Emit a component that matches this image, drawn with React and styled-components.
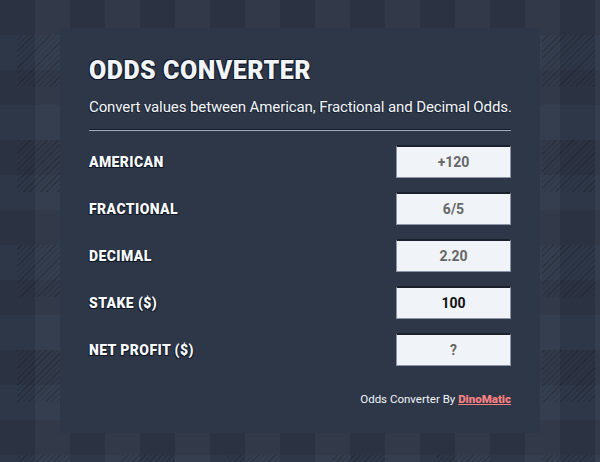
import React from "react";
import styled, { createGlobalStyle } from "styled-components";

const Global = createGlobalStyle`
  html, body { margin: 0; padding: 0; }
  body {
    background-color: #2d3748;
    font-family: "Roboto", "Inter", sans-serif;
    min-height: 462px;
  }
`;

const Page = styled.div`
  position: relative;
  min-height: 462px;
  padding-top: 28px;
  box-sizing: border-box;
  background-color: #2e3748;
  background-image:
    linear-gradient(90deg, rgba(255,255,255,0.035) 50%, transparent 50%),
    linear-gradient(0deg, rgba(0,0,0,0.07) 50%, transparent 50%);
  background-size: 70px 70px, 70px 70px;
  background-position: 35px 0, 0 35px;
  &::before {
    content: "";
    position: absolute;
    inset: 0;
    background-image: repeating-linear-gradient(
      135deg,
      rgba(0, 0, 0, 0.16) 0 1px,
      transparent 1px 4px
    );
    -webkit-mask-image: conic-gradient(#000 0 25%, transparent 0 100%);
    -webkit-mask-size: 105px 105px;
    -webkit-mask-position: 70px 35px;
    mask-image: conic-gradient(#000 0 25%, transparent 0 100%);
    mask-size: 105px 105px;
    mask-position: 70px 35px;
    pointer-events: none;
  }
`;

const Card = styled.div`
  position: relative;
  z-index: 1;
  width: 480px;
  height: 405px;
  margin: 0 auto;
  background: #2d3748;
  padding: 26px 29px 0;
  box-sizing: border-box;
  color: #f7fafc;
`;

const Title = styled.h1`
  margin: 0;
  font-size: 25px;
  font-weight: 900;
  letter-spacing: 0.5px;
  line-height: 34px;
  color: #f1f5f9;
  text-shadow: -1px 1px 0 #111827, 1px 1px 0 #111827, -1px -1px 0 #111827;
`;

const Subtitle = styled.p`
  margin: 7px 0 0;
  font-size: 15px;
  letter-spacing: -0.1px;
  white-space: nowrap;
  line-height: 24px;
  color: #f1f5f9;
  text-shadow: -1px 1px 0 #1a202c;
`;

const Divider = styled.hr`
  margin: 10px 0 0;
  border: 0;
  border-top: 1px solid #161c28;
  border-bottom: 1px solid #a0aec0;
  height: 0;
`;

const Rows = styled.div`
  display: flex;
  flex-direction: column;
  gap: 14px;
  margin-top: 14px;
`;

const Row = styled.div`
  display: flex;
  align-items: center;
  justify-content: space-between;
`;

const Label = styled.label`
  font-size: 14px;
  font-weight: 900;
  letter-spacing: 0.4px;
  color: #f8fafc;
  text-transform: uppercase;
  text-shadow: -1px 1px 0 #111827, 1px 1px 0 #111827;
`;

const Field = styled.div`
  width: 115px;
  height: 33px;
  box-sizing: border-box;
  background: #f0f4f8;
  border: 1px solid #8b95a7;
  border-top: 2px solid #1a202c;
  display: flex;
  align-items: center;
  justify-content: center;
  font-size: 14px;
  font-weight: 700;
  color: ${(p) => (p.$dark ? "#111" : "#666")};
`;

const Footer = styled.div`
  margin-top: 25px;
  line-height: 16px;
  text-align: right;
  font-size: 11.5px;
  color: #f1f5f9;
`;

const Link = styled.a`
  color: #fc8181;
  font-weight: 900;
  text-decoration: underline;
`;

const rows = [
  ["American", "+120"],
  ["Fractional", "6/5"],
  ["Decimal", "2.20"],
  ["Stake ($)", "100", true],
  ["Net Profit ($)", "?"],
];

export default function App() {
  return (
    <>
      <Global />
      <Page>
        <Card>
          <Title>ODDS CONVERTER</Title>
          <Subtitle>Convert values between American, Fractional and Decimal Odds.</Subtitle>
          <Divider />
          <Rows>
            {rows.map(([l, v, d]) => (
              <Row key={l}>
                <Label>{l}</Label>
                <Field $dark={d}>{v}</Field>
              </Row>
            ))}
          </Rows>
          <Footer>
            Odds Converter By <Link>DinoMatic</Link>
          </Footer>
        </Card>
      </Page>
    </>
  );
}
